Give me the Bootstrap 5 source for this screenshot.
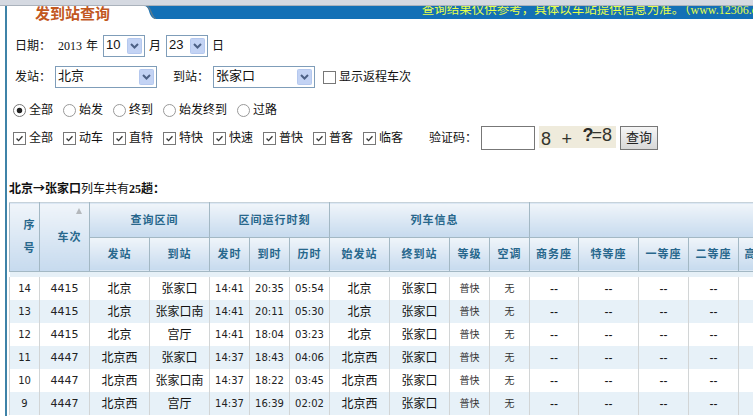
<!DOCTYPE html>
<html lang="zh-CN">

<head>
    <meta charset="UTF-8">
    <meta name="viewport" content="width=device-width, initial-scale=1.0">
    <title>发到站查询</title>

    <link href="https://cdn.jsdelivr.net/npm/bootstrap@5.3.3/dist/css/bootstrap.min.css" rel="stylesheet">
    <script src="https://cdn.jsdelivr.net/npm/bootstrap@5.3.3/dist/js/bootstrap.bundle.min.js"></script>

    <style>
        html, body { height: 416px; overflow: hidden; }
        body { background: #fff; color: #111; font: 12px/16px "Liberation Sans", "Noto Sans CJK SC", sans-serif; }

        .top-strip { height: 6px; background: #d5d9e1; border-bottom: 1px solid #aab2bc; }
        .page { margin-left: 5px; border-left: 2px solid #3f83a8; height: 410px; overflow: hidden; }

        .tab-bar { height: 13px; }
        .tab { width: 140px; padding-left: 28px; color: #c2581f; font-size: 15px; font-weight: 700; line-height: 15px; }
        .tab-slant { width: 12px; height: 13px; flex: none; }
        .notice { background: #1370b6; color: #e6ff4a; font-size: 12.5px; line-height: 9px; padding-left: 266px; white-space: nowrap; overflow: hidden; }
        .notice .site { font-family: "Liberation Serif", serif; font-size: 12px; }

        .filter-row { height: 22px; padding-left: 8px; }
        .row-date { margin-top: 16px; }
        .row-station { margin-top: 9px; }
        .row-radio { margin-top: 14px; height: 16px; padding-left: 6px; }
        .row-check { margin-top: 8px; height: 24px; padding-left: 6px; }
        .row-check .opt, .row-radio .opt { width: 50px; }
        .row-radio .opt-wide { width: 74px; }

        .field-label { width: 40px; }
        .year { font-family: "Liberation Serif", serif; margin-left: 3px; }
        .combo { appearance: none; height: 22px; border: 1px solid #7f9db9; border-radius: 0; padding: 0 0 3px 2px; color: #111; background: #fff url("data:image/svg+xml,%3Csvg xmlns='http://www.w3.org/2000/svg' width='15' height='16'%3E%3Crect x='.5' y='.5' width='14' height='15' rx='1' fill='%23c3d3f4' stroke='%23b5c8ee'/%3E%3Cpath d='M4 6l3.5 3.5L11 6' fill='none' stroke='%234d6185' stroke-width='2'/%3E%3C/svg%3E") no-repeat right 2px center; font: inherit; font-size: 13px; }
        .combo-sm { width: 42px; margin: 0 4px 0 5px; }
        .combo-lg { width: 102px; }

        .form-check-input.opt-box { width: 13px; height: 13px; margin: 0 3px 0 0; border: 1px solid #777; border-radius: 0; flex: none; float: none; }
        .form-check-input.opt-box[type=radio] { border-radius: 50%; border-color: #999; }
        .form-check-input.opt-box:checked { background-color: #fff; border-color: #777; }
        .form-check-input.opt-box:checked[type=checkbox] { background-image: url("data:image/svg+xml,%3Csvg xmlns='http://www.w3.org/2000/svg' viewBox='0 0 13 13'%3E%3Cpath d='M3 6.5l2.4 2.5L10 3.8' fill='none' stroke='%23333' stroke-width='1.6'/%3E%3C/svg%3E"); }
        .form-check-input.opt-box:checked[type=radio] { background-image: url("data:image/svg+xml,%3Csvg xmlns='http://www.w3.org/2000/svg' viewBox='0 0 13 13'%3E%3Ccircle cx='6.5' cy='6.5' r='3.2' fill='%23222'/%3E%3C/svg%3E"); }

        .captcha-label { margin-left: 16px; width: 52px; }
        .captcha-input { width: 54px; height: 24px; border: 1px solid #777; border-radius: 0; padding: 0 2px; }
        .captcha { width: 77px; height: 22px; margin: 0 4px; padding: 0 4px 0 2px; background: #efebdc; color: #33332c; font-size: 18px; line-height: 18px; }
        .captcha b { letter-spacing: -2px; color: #2b2b28; }
        .captcha .low { padding-top: 4px; }
        .btn-query { width: 38px; height: 24px; padding: 0; border: 1px solid #777; border-radius: 0; background: linear-gradient(#f5f5f5, #d8d8d8); color: #222; font-size: 13px; line-height: 20px; }

        .summary { margin: 30px 0 0 2px; height: 16px; }
        .summary b { font-family: "Noto Sans CJK SC", sans-serif; }
        .summary b.num { font-family: "Liberation Serif", serif; }

        .train-wrap { margin: 6px 0 0 2px; overflow: hidden; }
        .train-table { width: 749px; min-width: 749px; table-layout: fixed; border-collapse: collapse; margin: 0; text-align: center; }
        .train-table > thead > tr > th { position: relative; padding: 0; height: 34.5px; color: #27678c; font-size: 11px; font-weight: 700; letter-spacing: 1px; vertical-align: middle; background: linear-gradient(#f0f5fa, #c6daee); border: 1px solid #a3b8c4; border-top-color: #c6d2da; box-shadow: none; white-space: nowrap; }
        .train-table > thead > tr > th.group { padding-left: 10px; }
        .train-table > thead > tr > th.tall { height: 69px; line-height: 23px; padding-left: 10px; }
        .train-table > tbody > tr.gap > td { height: 5px; padding: 0; background: #e6f0f7; border: 0; box-shadow: none; }
        .train-table > tbody > tr > td { padding: 2px 0 0; height: 23px; line-height: 20px; border: 0; border-left: 1px solid #d2d5d6; border-right: 1px solid #d2d5d6; background: #fff; box-shadow: none; color: #111; white-space: nowrap; vertical-align: middle; }
        .train-table > tbody > tr:nth-child(odd):not(.gap) > td { background: #e7f1f8; }
        .train-table td.num { font-family: "DejaVu Sans", sans-serif; font-size: 10px; color: #222; }
        .train-table td.trips { font-family: "DejaVu Sans", sans-serif; font-size: 11px; color: #222; }
        .train-table td.small-cell { font-size: 10px; color: #333; }
        .sort-arrow { position: absolute; top: 5px; right: 7px; width: 0; height: 0; border: 3.5px solid transparent; border-top: 0; border-bottom: 6px solid #b4b8bc; }
    </style>
</head>

<body>
    <div class="top-strip"></div>

    <div class="page">
        <div class="tab-bar d-flex">
            <div class="tab bg-white">发到站查询</div>
            <svg class="tab-slant" viewBox="0 0 12 13">
                <rect width="12" height="13" fill="#1370b6" />
                <path d="M0 0C3 0 4 2 5 5 6 9 8 13 12 13H0Z" fill="#fff" />
                <path d="M3 0C5 1 6 3 7 6 8 9 9 12 12 13" fill="none" stroke="#5b7b8f" stroke-width="1.5" />
            </svg>
            <div class="notice flex-grow-1">查询结果仅供参考，具体以车站提供信息为准。（<span class="site">www.12306.cn</span></div>
        </div>

        <form>
            <div class="filter-row row-date d-flex align-items-center">
                <span class="field-label">日期：</span>
                <span class="year">2013</span><span class="ms-1">年</span>
                <select class="combo combo-sm"><option>10</option></select>
                <span>月</span>
                <select class="combo combo-sm"><option>23</option></select>
                <span>日</span>
            </div>

            <div class="filter-row row-station d-flex align-items-center">
                <span class="field-label">发站：</span>
                <select class="combo combo-lg"><option>北京</option></select>
                <span class="field-label ms-3">到站：</span>
                <select class="combo combo-lg"><option>张家口</option></select>
                <label class="d-flex align-items-center ms-2">
                    <input class="form-check-input opt-box" type="checkbox">显示返程车次
                </label>
            </div>

            <div class="filter-row row-radio d-flex align-items-center">
                <label class="opt d-flex align-items-center"><input class="form-check-input opt-box" type="radio" name="kind" checked>全部</label>
                <label class="opt d-flex align-items-center"><input class="form-check-input opt-box" type="radio" name="kind">始发</label>
                <label class="opt d-flex align-items-center"><input class="form-check-input opt-box" type="radio" name="kind">终到</label>
                <label class="opt-wide d-flex align-items-center"><input class="form-check-input opt-box" type="radio" name="kind">始发终到</label>
                <label class="opt d-flex align-items-center"><input class="form-check-input opt-box" type="radio" name="kind">过路</label>
            </div>

            <div class="filter-row row-check d-flex align-items-center">
                <label class="opt d-flex align-items-center"><input class="form-check-input opt-box" type="checkbox" checked>全部</label>
                <label class="opt d-flex align-items-center"><input class="form-check-input opt-box" type="checkbox" checked>动车</label>
                <label class="opt d-flex align-items-center"><input class="form-check-input opt-box" type="checkbox" checked>直特</label>
                <label class="opt d-flex align-items-center"><input class="form-check-input opt-box" type="checkbox" checked>特快</label>
                <label class="opt d-flex align-items-center"><input class="form-check-input opt-box" type="checkbox" checked>快速</label>
                <label class="opt d-flex align-items-center"><input class="form-check-input opt-box" type="checkbox" checked>普快</label>
                <label class="opt d-flex align-items-center"><input class="form-check-input opt-box" type="checkbox" checked>普客</label>
                <label class="opt d-flex align-items-center"><input class="form-check-input opt-box" type="checkbox" checked>临客</label>
                <span class="captcha-label">验证码：</span>
                <input class="form-control captcha-input" type="text">
                <div class="captcha d-flex justify-content-between align-items-start align-self-start">
                    <span class="low">8</span><span class="low">+</span><span><b>?</b>=8</span>
                </div>
                <button type="button" class="btn btn-query">查询</button>
            </div>
        </form>

        <div class="summary"><b>北京→张家口</b>列车共有<b class="num">25</b><b>趟：</b></div>

        <div class="train-wrap">
            <table class="table train-table">
                <colgroup>
                    <col width="30"><col width="50"><col width="60"><col width="60"><col width="40"><col width="40"><col width="40">
                    <col width="60"><col width="60"><col width="40"><col width="40"><col width="49"><col width="60"><col width="50"><col width="50"><col width="60">
                </colgroup>
                <thead>
                    <tr>
                        <th class="tall" rowspan="2">序<br>号</th>
                        <th class="tall" rowspan="2">车次<span class="sort-arrow"></span></th>
                        <th class="group" colspan="2">查询区间</th>
                        <th class="group" colspan="3">区间运行时刻</th>
                        <th class="group" colspan="4">列车信息</th>
                        <th colspan="5"></th>
                    </tr>
                    <tr>
                        <th>发站</th><th>到站</th><th>发时</th><th>到时</th><th>历时</th><th>始发站</th><th>终到站</th><th>等级</th><th>空调</th>
                        <th>商务座</th><th>特等座</th><th>一等座</th><th>二等座</th><th>高级软卧</th>
                    </tr>
                </thead>
                <tbody id="corpo-trens">
                    <tr class="gap"><td colspan="16"></td></tr>
                </tbody>
            </table>
        </div>
    </div>

    <script>
        const trens = [
            [14, 4415, '北京', '张家口', '14:41', '20:35', '05:54', '北京'],
            [13, 4415, '北京', '张家口南', '14:41', '20:11', '05:30', '北京'],
            [12, 4415, '北京', '宫厅', '14:41', '18:04', '03:23', '北京'],
            [11, 4447, '北京西', '张家口', '14:37', '18:43', '04:06', '北京西'],
            [10, 4447, '北京西', '张家口南', '14:37', '18:22', '03:45', '北京西'],
            [9, 4447, '北京西', '宫厅', '14:37', '16:39', '02:02', '北京西']
        ];

        const corpo = document.getElementById('corpo-trens');
        trens.forEach((t) => {
            const linha = document.createElement('tr');
            linha.innerHTML = `
                <td class="num">${t[0]}</td>
                <td class="trips">${t[1]}</td>
                <td>${t[2]}</td>
                <td>${t[3]}</td>
                <td class="num">${t[4]}</td>
                <td class="num">${t[5]}</td>
                <td class="num">${t[6]}</td>
                <td>${t[7]}</td>
                <td>张家口</td>
                <td class="small-cell">普快</td>
                <td class="small-cell">无</td>
                <td>--</td><td>--</td><td>--</td><td>--</td><td>--</td>
            `;
            corpo.appendChild(linha);
        });
    </script>
</body>

</html>
